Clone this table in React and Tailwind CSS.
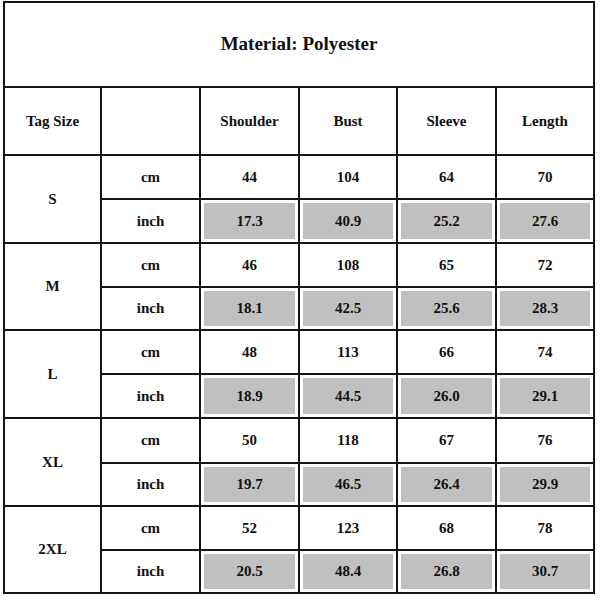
import React from "react";

const sizes = [
  { tag: "S", cm: ["44", "104", "64", "70"], inch: ["17.3", "40.9", "25.2", "27.6"] },
  { tag: "M", cm: ["46", "108", "65", "72"], inch: ["18.1", "42.5", "25.6", "28.3"] },
  { tag: "L", cm: ["48", "113", "66", "74"], inch: ["18.9", "44.5", "26.0", "29.1"] },
  { tag: "XL", cm: ["50", "118", "67", "76"], inch: ["19.7", "46.5", "26.4", "29.9"] },
  { tag: "2XL", cm: ["52", "123", "68", "78"], inch: ["20.5", "48.4", "26.8", "30.7"] },
];

const heads = ["Shoulder", "Bust", "Sleeve", "Length"];

function Cell({ children, className = "" }) {
  return (
    <div className={"bg-white flex items-center justify-center " + className}>
      {children}
    </div>
  );
}

function GrayCell({ children }) {
  return (
    <div className="bg-white p-[3px] flex">
      <div className="flex-1 bg-[#c0c0c0] flex items-center justify-center">
        {children}
      </div>
    </div>
  );
}

export default function App() {
  return (
    <div className="w-[600px] h-[600px] bg-white pt-[1px] pl-[3px]">
      <div
        className="w-[592px] grid gap-[2px] p-[2px] bg-[#141414] text-[#111] font-bold text-[15px] grid-cols-[95px_97px_97px_96px_97px_96px] grid-rows-[83px_66px_42px_42px_42px_41px_42px_42px_43px_41px_42px_41px]"
        style={{ fontFamily: '"Liberation Serif", "Times New Roman", serif' }}
      >
        <Cell className="col-span-6 text-[19px]">Material: Polyester</Cell>

        <Cell>Tag Size</Cell>
        <Cell></Cell>
        {heads.map((h) => (
          <Cell key={h}>{h}</Cell>
        ))}

        {sizes.map((s) => (
          <React.Fragment key={s.tag}>
            <Cell className="row-span-2">{s.tag}</Cell>
            <Cell>cm</Cell>
            {s.cm.map((v, i) => (
              <Cell key={"c" + i}>{v}</Cell>
            ))}
            <Cell>inch</Cell>
            {s.inch.map((v, i) => (
              <GrayCell key={"i" + i}>{v}</GrayCell>
            ))}
          </React.Fragment>
        ))}
      </div>
    </div>
  );
}
